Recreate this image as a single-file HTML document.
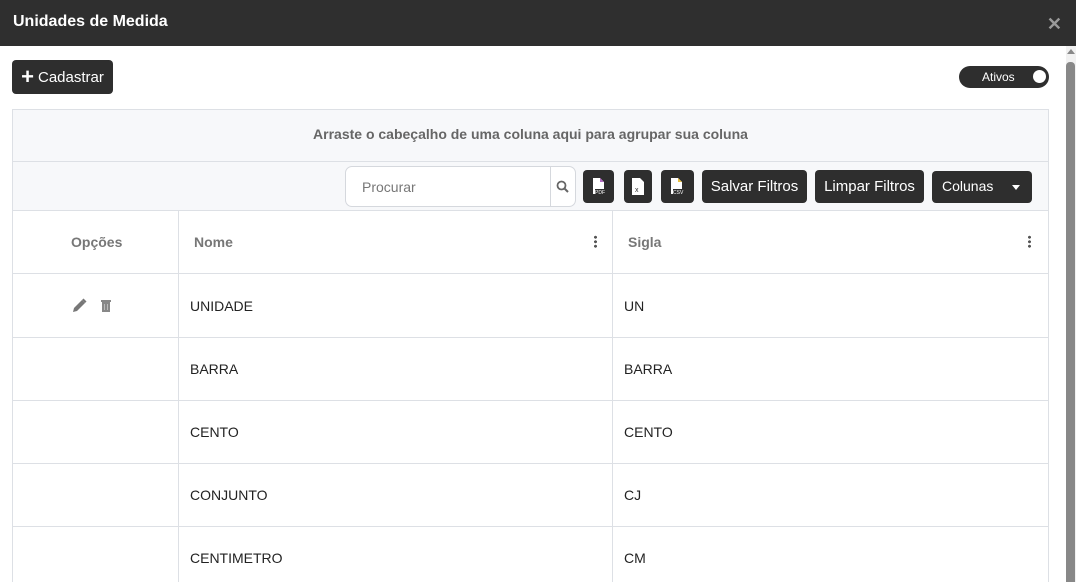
<!DOCTYPE html>
<html><head><style>
*{box-sizing:border-box;margin:0;padding:0}
html,body{width:1076px;height:582px;overflow:hidden}
body{background:#fff;font-family:"Liberation Sans",Arial,sans-serif;position:relative}
.hdr{position:absolute;left:0;top:0;width:1076px;height:46px;background:#2f2f2f;color:#fff;font-weight:bold;font-size:16px;padding:13px 0 0 13px}
.x{position:absolute;right:14px;top:14px;color:#9a9a9a;font-size:18px;font-weight:bold}
.btn{position:absolute;background:#2e2e2e;color:#fff;border-radius:4px;font-size:15px;display:flex;align-items:center;justify-content:center}
.grid{position:absolute;left:12px;top:109px;width:1037px;height:473px;border:1px solid #dde0e5;border-bottom:none;overflow:hidden}
.gp{height:52px;background:#f7f8fa;border-bottom:1px solid #dde0e5;text-align:center;color:#666;font-size:14px;font-weight:bold;padding-top:16px}
.tb{height:49px;background:#f7f8fa;border-bottom:1px solid #dde0e5;position:relative}
.row{position:absolute;left:0;width:1035px;border-bottom:1px solid #dde0e5;font-size:14px;color:#222}
.c{position:absolute;top:0;height:100%;display:flex;align-items:center}
.v1{position:absolute;left:165px;top:100px;width:1px;height:400px;background:#dde0e5}
.v2{position:absolute;left:599px;top:100px;width:1px;height:400px;background:#dde0e5}
.dots{position:absolute;width:3px;height:13px;background:radial-gradient(circle,#555 1.4px,transparent 1.6px) 0 0/3px 4.5px repeat-y}
.ic{position:absolute;top:8px;width:31px;height:33px;background:#2e2e2e;border-radius:4px}
</style></head><body>
<div class="hdr">Unidades de Medida<span class="x">✕</span></div>
<div class="btn" style="left:12px;top:60px;width:101px;height:34px"><span style="font-size:22px;font-weight:bold;margin-right:4px;line-height:1">+</span>Cadastrar</div>
<div style="position:absolute;left:959px;top:66px;width:90px;height:22px;background:#2e2e2e;border-radius:11px;color:#fff;font-size:12px;padding:4px 0 0 23px">Ativos<span style="position:absolute;right:3px;top:4px;width:13px;height:13px;border-radius:50%;background:#fff"></span></div>
<div style="position:absolute;left:1066px;top:46px;width:10px;height:536px;background:#f1f1f1"></div>
<div style="position:absolute;left:1066px;top:49px;width:0;height:0;border-left:4px solid transparent;border-right:4px solid transparent;border-bottom:5px solid #888;margin-left:1px"></div>
<div style="position:absolute;left:1066px;top:62px;width:9px;height:520px;background:#888;border-radius:4px 4px 0 0"></div>
<div class="grid">
<div class="gp">Arraste o cabeçalho de uma coluna aqui para agrupar sua coluna</div>
<div class="tb">
<div style="position:absolute;left:332px;top:4px;width:231px;height:41px;background:#fff;border:1px solid #d5d8dd;border-radius:7px;font-size:14px;color:#777;padding:12px 0 0 16px">Procurar<span style="position:absolute;left:204px;top:0;width:1px;height:39px;background:#d5d8dd"></span><svg style="position:absolute;left:210px;top:13px" width="13" height="13" viewBox="0 0 13 13"><circle cx="5.5" cy="5.5" r="4" fill="none" stroke="#666" stroke-width="1.8"/><path d="M8.5 8.5L12 12" stroke="#666" stroke-width="2"/></svg></div>
<div class="ic" style="left:570px"><svg width="31" height="33"><path d="M10 8h7l4 4v12h-11z" fill="#fff"/><path d="M17 8v4h4" fill="#b36bc4"/><rect x="12" y="19" width="9" height="5" fill="#2e2e2e"/><text x="12" y="24" font-size="5" fill="#fff" font-family="Liberation Sans">PDF</text></svg></div>
<div class="ic" style="left:611px;width:28px"><svg width="28" height="33"><path d="M8 8h8l4 4v13h-12z" fill="#fff"/><text x="11" y="22" font-size="7" fill="#2e2e2e" font-family="Liberation Sans">x</text></svg></div>
<div class="ic" style="left:648px;width:33px"><svg width="33" height="33"><path d="M10 8h7l4 4v12h-11z" fill="#fff"/><path d="M17 8v4h4" fill="#e8c040"/><rect x="12" y="19" width="10" height="5" fill="#2e2e2e"/><text x="12" y="24" font-size="5" fill="#fff" font-family="Liberation Sans">CSV</text></svg></div>
<div class="btn" style="left:689px;top:8px;width:105px;height:33px">Salvar Filtros</div>
<div class="btn" style="left:802px;top:8px;width:109px;height:33px">Limpar Filtros</div>
<div class="btn" style="left:919px;top:9px;width:100px;height:32px;justify-content:flex-start;padding-left:10px;font-size:14px;padding-bottom:3px">Colunas<span style="position:absolute;right:12px;top:14px;border-left:4.5px solid transparent;border-right:4.5px solid transparent;border-top:5px solid #fff"></span></div>
</div>
<div class="row" style="top:100px;height:64px;color:#777;font-weight:bold;font-size:14px">
<div class="c" style="left:58px">Opções</div><div class="c" style="left:181px">Nome</div><div class="c" style="left:615px">Sigla</div>
<div class="dots" style="left:581px;top:25px"></div><div class="dots" style="left:1015px;top:25px"></div></div>
<div class="row" style="top:164px;height:64px"><div class="c" style="left:58px"><svg width="16" height="16" viewBox="0 0 16 16"><path d="M2 14l1-4 8-8 3 3-8 8z" fill="#777"/><path d="M11 2l1.5-1.5 3 3L14 5z" fill="#777"/></svg><svg style="margin-left:13px" width="12" height="13" viewBox="0 0 12 13"><rect x="1" y="1" width="10" height="2" fill="#888"/><rect x="2" y="3" width="8" height="10" fill="#888"/><path d="M4.5 5v6M7.5 5v6" stroke="#bbb"/></svg></div><div class="c" style="left:177px">UNIDADE</div><div class="c" style="left:611px">UN</div></div>
<div class="row" style="top:228px;height:63px"><div class="c" style="left:177px">BARRA</div><div class="c" style="left:611px">BARRA</div></div>
<div class="row" style="top:291px;height:63px"><div class="c" style="left:177px">CENTO</div><div class="c" style="left:611px">CENTO</div></div>
<div class="row" style="top:354px;height:63px"><div class="c" style="left:177px">CONJUNTO</div><div class="c" style="left:611px">CJ</div></div>
<div class="row" style="top:417px;height:63px"><div class="c" style="left:177px">CENTIMETRO</div><div class="c" style="left:611px">CM</div></div>
<div class="v1"></div><div class="v2"></div>
</div>
</body></html>
